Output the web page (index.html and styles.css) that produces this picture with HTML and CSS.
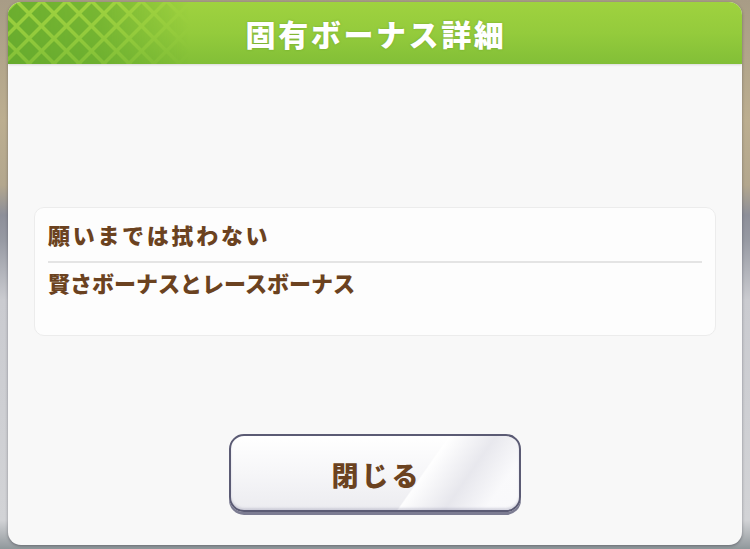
FILE: index.html
```html
<!DOCTYPE html>
<html lang="ja">
<head>
<meta charset="utf-8">
<title>固有ボーナス詳細</title>
<link rel="stylesheet" href="styles.css">
</head>
<body>
<div class="dialog">
  <div class="header">
    <svg class="lattice" width="180" height="62" viewBox="0 0 180 62" aria-hidden="true">
      <defs>
        <pattern id="dia" width="25" height="25" patternUnits="userSpaceOnUse" x="-4" y="-1">
          <polygon points="12.5,2.5 22.5,12.5 12.5,22.5 2.5,12.5" fill="#5fa52b"/>
          <polygon points="0,-10 10,0 0,10 -10,0" fill="#5fa52b"/>
          <polygon points="25,-10 35,0 25,10 15,0" fill="#5fa52b"/>
          <polygon points="0,15 10,25 0,35 -10,25" fill="#5fa52b"/>
          <polygon points="25,15 35,25 25,35 15,25" fill="#5fa52b"/>
        </pattern>
        <linearGradient id="fade" x1="0" y1="0" x2="1" y2="0">
          <stop offset="0" stop-color="#fff" stop-opacity="0.8"/>
          <stop offset="0.5" stop-color="#fff" stop-opacity="0.6"/>
          <stop offset="1" stop-color="#fff" stop-opacity="0"/>
        </linearGradient>
        <mask id="m"><rect width="180" height="62" fill="url(#fade)"/></mask>
      </defs>
      <rect width="180" height="62" fill="url(#dia)" mask="url(#m)"/>
    </svg>
    <h1 class="title">固有ボーナス詳細</h1>
  </div>
  <div class="content">
    <div class="card">
      <div class="row row-first">願いまでは拭わない</div>
      <div class="divider"></div>
      <div class="row">賢さボーナスとレースボーナス</div>
    </div>
    <button class="close" type="button"><span>閉じる</span></button>
  </div>
</div>
</body>
</html>
```
FILE: styles.css
```css
html, body {
  margin: 0;
  padding: 0;
}
body {
  width: 750px;
  height: 549px;
  overflow: hidden;
  font-family: "Noto Sans CJK JP", "Noto Sans", sans-serif;
  background: linear-gradient(to bottom, #a89c86 0, #bcae90 120px, #b3a78e 185px, #8d8f99 215px, #979aa3 240px, #cacbd0 300px, #d2d3d6 520px, #9aa0a4 545px, #8e989a 100%);
  padding-top: 2px;
  box-sizing: border-box;
}
.dialog {
  margin: 0 8px;
  width: 734px;
  height: 543px;
  background: #f8f8f8;
  border-radius: 13px;
  box-shadow: 0 1px 3px rgba(40, 40, 50, 0.45);
  display: flex;
  flex-direction: column;
  overflow: hidden;
}
.header {
  position: relative;
  height: 62px;
  flex: none;
  background: linear-gradient(to bottom, #9fd23f 0, #94cb3c 50%, #82bf37 100%);
  display: flex;
  align-items: center;
  justify-content: center;
  box-shadow: 0 1px 2px rgba(0, 0, 0, 0.12);
}
.lattice {
  position: absolute;
  left: 0;
  top: 0;
}
.title {
  position: relative;
  margin: 0;
  color: #ffffff;
  font-size: 30px;
  font-weight: 900;
  letter-spacing: 2.6px;
  line-height: 1;
  text-shadow: 0 0 2px rgba(80, 130, 30, 0.5);
  padding-left: 2px;
}
.content {
  flex: 1;
  display: flex;
  flex-direction: column;
  align-items: center;
  padding-top: 143px;
}
.card {
  align-self: stretch;
  margin: 0 26px;
  height: 129px;
  box-sizing: border-box;
  background: #fdfdfd;
  border: 1px solid #ececec;
  border-radius: 10px;
  padding: 10px 13px 0 13px;
}
.row {
  color: #6b4220;
  font-size: 22px;
  font-weight: 900;
  line-height: 32px;
  letter-spacing: 0;
}
.row-first {
  letter-spacing: 2.7px;
}
.divider {
  height: 2px;
  background: #e4e4e4;
  margin: 11px 0 3px;
}
.close {
  margin-top: 98px;
  width: 292px;
  height: 78px;
  box-sizing: border-box;
  border: 2px solid #5b5b74;
  border-radius: 15px;
  background:
    linear-gradient(125deg, rgba(255,255,255,0) 0, rgba(255,255,255,0) 64%, rgba(255,255,255,0.9) 64.5%, rgba(230,230,236,0.9) 78%, rgba(250,250,252,0.9) 90%),
    linear-gradient(to bottom, #ffffff 0, #f6f6f8 50%, #ececf0 100%);
  box-shadow: 0 3px 0 #7c7c92, inset 0 -2px 2px rgba(120, 120, 150, 0.25);
  display: flex;
  align-items: center;
  justify-content: center;
  padding: 0;
  font-family: "Noto Sans CJK JP", "Noto Sans", sans-serif;
  cursor: pointer;
}
.close span {
  color: #6b4220;
  font-size: 27px;
  font-weight: 900;
  letter-spacing: 3px;
  line-height: 1;
  padding-left: 3px;
  margin-top: 2px;
}
```
